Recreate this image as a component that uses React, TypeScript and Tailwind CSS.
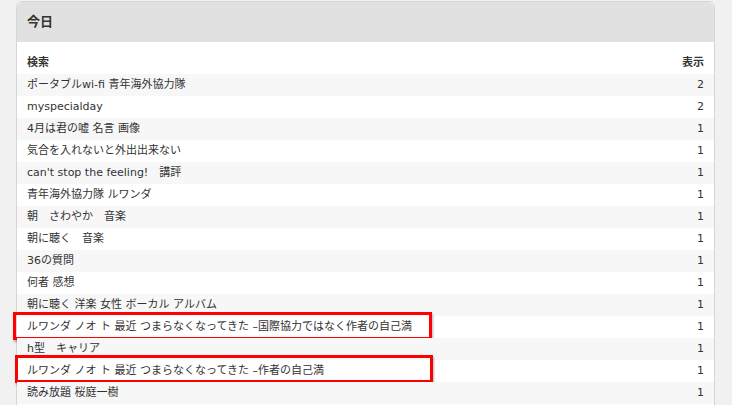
import React from "react";

type Row = { q: string; n: number; mark?: "a" | "b" };

const rows: Row[] = [
    { q: "ポータブルwi-fi 青年海外協力隊", n: 2 },
    { q: "myspecialday", n: 2 },
    { q: "4月は君の嘘 名言 画像", n: 1 },
    { q: "気合を入れないと外出出来ない", n: 1 },
    { q: "can't stop the feeling!\u3000講評", n: 1 },
    { q: "青年海外協力隊 ルワンダ", n: 1 },
    { q: "朝\u3000さわやか\u3000音楽", n: 1 },
    { q: "朝に聴く\u3000音楽", n: 1 },
    { q: "36の質問", n: 1 },
    { q: "何者 感想", n: 1 },
    { q: "朝に聴く 洋楽 女性 ボーカル アルバム", n: 1 },
    { q: "ルワンダ ノオ ト 最近 つまらなくなってきた –国際協力ではなく作者の自己満", n: 1, mark: "a" },
    { q: "h型\u3000キャリア", n: 1 },
    { q: "ルワンダ ノオ ト 最近 つまらなくなってきた –作者の自己満", n: 1, mark: "b" },
    { q: "読み放題 桜庭一樹", n: 1 },
];

export default function App() {
    return (
        <div
            className="w-[732px] h-[405px] overflow-hidden bg-[#f1f1f1] pt-px pl-[16px] text-[#333] text-[11px]"
            style={{ fontFamily: '"DejaVu Sans", "Noto Sans CJK JP", sans-serif' }}
        >
            <div className="w-[699px] rounded-t-[6px] border border-[#d6d6d6] bg-white pb-[4px]">
                {/* Header */}
                <div className="h-[40px] rounded-t-[6px] bg-[#e1e1e1] flex items-center px-[10px]">
                    <h2 className="text-[13px] font-bold text-[#333]">今日</h2>
                </div>

                {/* Table */}
                <div className="pt-[10px]">
                    <div className="h-[22px] flex items-center justify-between px-[10px] font-bold">
                        <span>検索</span>
                        <span>表示</span>
                    </div>
                    {rows.map((r, i) => (
                        <div
                            key={i}
                            className={`relative h-[22px] flex items-center justify-between px-[10px] ${
                                i % 2 === 0 ? "bg-[#f7f7f7]" : "bg-white"
                            }`}
                        >
                            {r.mark === "a" && (
                                <span className="absolute left-[-4px] top-[-4px] w-[419px] h-[28px] border-[3px] border-[#f00] shadow-[1px_2px_2px_rgba(0,0,0,0.3)]" />
                            )}
                            {r.mark === "b" && (
                                <span className="absolute left-[-2px] top-[-5px] w-[418px] h-[28px] border-[3px] border-[#f00] shadow-[1px_2px_2px_rgba(0,0,0,0.3)]" />
                            )}
                            <span className="whitespace-nowrap">{r.q}</span>
                            <span>{r.n}</span>
                        </div>
                    ))}
                </div>
            </div>
        </div>
    );
}
